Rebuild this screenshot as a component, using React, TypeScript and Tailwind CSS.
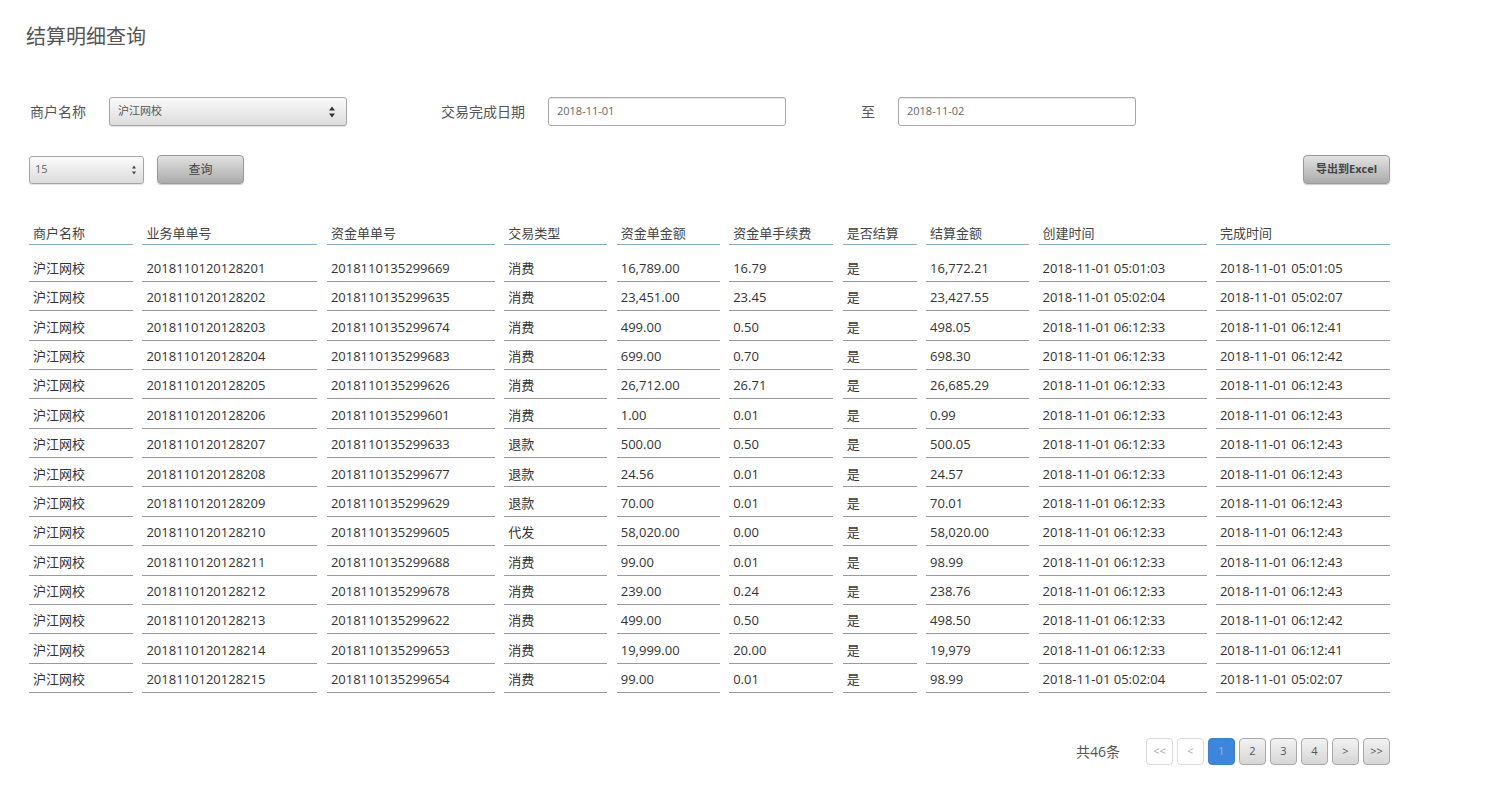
import React from "react";

const FONT = { fontFamily: '"Open Sans", "Noto Sans CJK SC", sans-serif' };

const rows: string[][] = [
  ["2018110120128201", "2018110135299669", "消费", "16,789.00", "16.79", "16,772.21", "2018-11-01 05:01:03", "2018-11-01 05:01:05"],
  ["2018110120128202", "2018110135299635", "消费", "23,451.00", "23.45", "23,427.55", "2018-11-01 05:02:04", "2018-11-01 05:02:07"],
  ["2018110120128203", "2018110135299674", "消费", "499.00", "0.50", "498.05", "2018-11-01 06:12:33", "2018-11-01 06:12:41"],
  ["2018110120128204", "2018110135299683", "消费", "699.00", "0.70", "698.30", "2018-11-01 06:12:33", "2018-11-01 06:12:42"],
  ["2018110120128205", "2018110135299626", "消费", "26,712.00", "26.71", "26,685.29", "2018-11-01 06:12:33", "2018-11-01 06:12:43"],
  ["2018110120128206", "2018110135299601", "消费", "1.00", "0.01", "0.99", "2018-11-01 06:12:33", "2018-11-01 06:12:43"],
  ["2018110120128207", "2018110135299633", "退款", "500.00", "0.50", "500.05", "2018-11-01 06:12:33", "2018-11-01 06:12:43"],
  ["2018110120128208", "2018110135299677", "退款", "24.56", "0.01", "24.57", "2018-11-01 06:12:33", "2018-11-01 06:12:43"],
  ["2018110120128209", "2018110135299629", "退款", "70.00", "0.01", "70.01", "2018-11-01 06:12:33", "2018-11-01 06:12:43"],
  ["2018110120128210", "2018110135299605", "代发", "58,020.00", "0.00", "58,020.00", "2018-11-01 06:12:33", "2018-11-01 06:12:43"],
  ["2018110120128211", "2018110135299688", "消费", "99.00", "0.01", "98.99", "2018-11-01 06:12:33", "2018-11-01 06:12:43"],
  ["2018110120128212", "2018110135299678", "消费", "239.00", "0.24", "238.76", "2018-11-01 06:12:33", "2018-11-01 06:12:43"],
  ["2018110120128213", "2018110135299622", "消费", "499.00", "0.50", "498.50", "2018-11-01 06:12:33", "2018-11-01 06:12:42"],
  ["2018110120128214", "2018110135299653", "消费", "19,999.00", "20.00", "19,979", "2018-11-01 06:12:33", "2018-11-01 06:12:41"],
  ["2018110120128215", "2018110135299654", "消费", "99.00", "0.01", "98.99", "2018-11-01 05:02:04", "2018-11-01 05:02:07"],
];

const headers = ["商户名称", "业务单单号", "资金单单号", "交易类型", "资金单金额", "资金单手续费", "是否结算", "结算金额", "创建时间", "完成时间"];

const GRID = "grid grid-cols-[104px_175px_168px_103px_103px_104px_74px_103px_168px_174px] gap-x-[9.44px] w-[1361px]";

function Arrows({ small }: { small?: boolean }) {
  return (
    <svg width="8" height={small ? 12 : 14} viewBox={small ? "0 0 8 12" : "0 0 8 14"}>
      {small ? (
        <>
          <path d="M4 1.5 L6 4.5 L2 4.5 Z" fill="#444" />
          <path d="M4 10.5 L6 7.5 L2 7.5 Z" fill="#444" />
        </>
      ) : (
        <>
          <path d="M4 1.5 L7 5.5 L1 5.5 Z" fill="#333" />
          <path d="M4 12.5 L7 8.5 L1 8.5 Z" fill="#333" />
        </>
      )}
    </svg>
  );
}

export default function App() {
  return (
    <div className="bg-white w-[1500px] min-h-[795px] text-[#444]" style={FONT}>
      <div className="pl-[29px] pt-[23px]">
        <h1 className="-ml-[3px] text-[20px] leading-[28px] text-[#555] font-normal">结算明细查询</h1>

        <div className="mt-[46px] flex items-center h-[29px]">
          <span className="text-[14px] text-[#555] ml-[1px]">商户名称</span>
          <div className="ml-[23px] w-[238px] h-[29px] flex items-center justify-between pl-[8px] pr-[10px] rounded-[3px] border border-[#a5a5a5] bg-gradient-to-b from-[#fbfbfb] to-[#dcdcdc] shadow-[0_1px_1px_rgba(0,0,0,0.12)]">
            <span className="text-[11px] text-[#555]">沪江网校</span>
            <Arrows />
          </div>
          <span className="ml-[94px] text-[14px] text-[#555]">交易完成日期</span>
          <div className="ml-[23px] w-[238px] h-[29px] flex items-center pl-[8px] rounded-[3px] border border-[#a8a8a8] bg-white shadow-[inset_0_1px_1px_rgba(0,0,0,0.1)]">
            <span className="text-[11px] text-[#666]">2018-11-01</span>
          </div>
          <span className="ml-[75px] text-[14px] text-[#555]">至</span>
          <div className="ml-[23px] w-[238px] h-[29px] flex items-center pl-[8px] rounded-[3px] border border-[#a8a8a8] bg-white shadow-[inset_0_1px_1px_rgba(0,0,0,0.1)]">
            <span className="text-[11px] text-[#666]">2018-11-02</span>
          </div>
        </div>

        <div className="mt-[29px] flex items-center justify-between w-[1361px]">
          <div className="flex items-center">
            <div className="w-[115px] h-[28px] flex items-center justify-between pl-[5px] pr-[5px] rounded-[3px] border border-[#a5a5a5] bg-gradient-to-b from-[#fbfbfb] to-[#dcdcdc] shadow-[0_1px_1px_rgba(0,0,0,0.12)]">
              <span className="text-[11px] text-[#666]">15</span>
              <Arrows small />
            </div>
            <div className="ml-[13px] w-[87px] h-[29px] flex items-center justify-center rounded-[4px] border border-[#9a9a9a] bg-gradient-to-b from-[#e2e2e2] to-[#ababab] shadow-[0_1px_1px_rgba(0,0,0,0.2)]">
              <span className="text-[12px] text-[#444]">查询</span>
            </div>
          </div>
          <div className="w-[87px] h-[29px] flex items-center justify-center rounded-[4px] border border-[#9a9a9a] bg-gradient-to-b from-[#e2e2e2] to-[#ababab] shadow-[0_1px_1px_rgba(0,0,0,0.2)]">
            <span className="text-[11px] font-bold text-[#444]">导出到Excel</span>
          </div>
        </div>

        <div className="mt-[37px]">
          <div className={GRID}>
            {headers.map((h) => (
              <div key={h} className="h-[24px] border-b border-[#88a6c6] pl-[4px] pt-[2px] flex items-center text-[13px] text-[#444]">
                {h}
              </div>
            ))}
          </div>
          <div className="mt-[7.6px]">
            {rows.map((r, i) => {
              const cells = ["沪江网校", r[0], r[1], r[2], r[3], r[4], "是", r[5], r[6], r[7]];
              return (
                <div key={i} className={GRID}>
                  {cells.map((c, j) => (
                    <div
                      key={j}
                      className="h-[29.36px] border-b border-[#9a9a9a] pl-[4px] pt-[4px] flex items-center text-[13px] text-[#333] whitespace-nowrap"
                    >
                      {c}
                    </div>
                  ))}
                </div>
              );
            })}
          </div>
        </div>

        <div className="mt-[45px] w-[1361px] flex items-center justify-end">
          <span className="text-[14px] text-[#555] mr-[26px]">共46条</span>
          <div className="flex gap-[4px]">
            {["<<", "<"].map((t) => (
              <div key={t} className="w-[27px] h-[27px] flex items-center justify-center rounded-[4px] border border-[#dcdcdc] bg-white text-[11px] text-[#aaa]">
                {t}
              </div>
            ))}
            <div className="w-[27px] h-[27px] flex items-center justify-center rounded-[4px] bg-[#3d86dc] border border-[#3a80d4] text-[11px] text-[#8fb9ec]">
              1
            </div>
            {["2", "3", "4", ">", ">>"].map((t) => (
              <div key={t} className="w-[27px] h-[27px] flex items-center justify-center rounded-[4px] border border-[#a9a9a9] bg-gradient-to-b from-[#f2f2f2] to-[#d6d6d6] text-[11px] text-[#555]">
                {t}
              </div>
            ))}
          </div>
        </div>
      </div>
    </div>
  );
}
